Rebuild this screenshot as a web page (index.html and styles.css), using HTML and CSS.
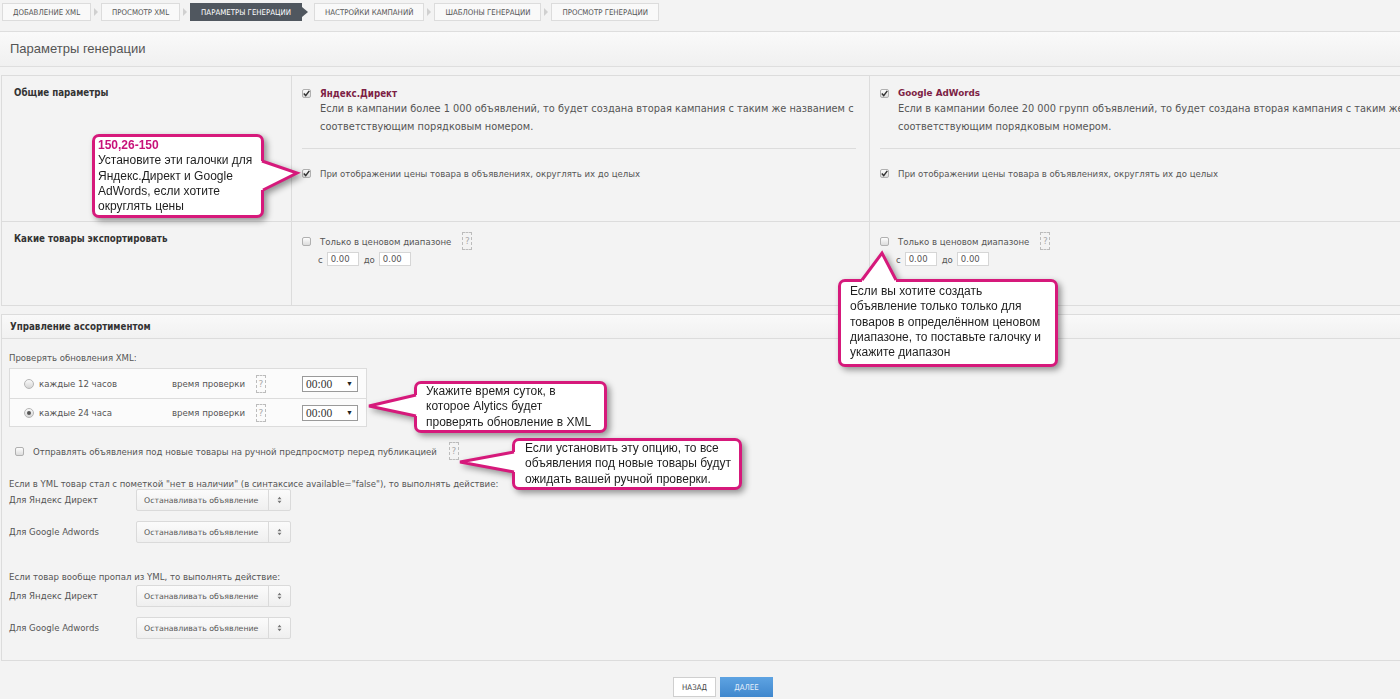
FILE: index.html
```html
<!DOCTYPE html>
<html lang="ru">
<head>
<meta charset="utf-8">
<title>Параметры генерации</title>
<link rel="stylesheet" href="styles.css">
</head>
<body>
<div class="page">
  <nav class="steps">
    <span class="step">Добавление XML</span><span class="arr"></span>
    <span class="step">Просмотр XML</span><span class="arr"></span>
    <span class="step active">Параметры генерации</span><span class="arr act"></span>
    <span class="step">Настройки кампаний</span><span class="arr"></span>
    <span class="step">Шаблоны генерации</span><span class="arr"></span>
    <span class="step">Просмотр генерации</span>
  </nav>

  <div class="titlebar"><h1>Параметры генерации</h1></div>

  <div class="grid">
    <div class="cell lab">Общие параметры</div>
    <div class="cell opt">
      <div class="ohead"><span class="cb on"><svg viewBox="0 0 9 9"><path d="M1.8 4.6 L3.7 6.6 L7.3 1.9"/></svg></span><span class="brand">Яндекс.Директ</span></div>
      <div class="desc">Если в кампании более 1 000 объявлений, то будет создана вторая кампания с таким же названием с<br>соответствующим порядковым номером.</div>
      <div class="hsep"></div>
      <div class="ohead round"><span class="cb on"><svg viewBox="0 0 9 9"><path d="M1.8 4.6 L3.7 6.6 L7.3 1.9"/></svg></span><span class="ntext">При отображении цены товара в объявлениях, округлять их до целых</span></div>
    </div>
    <div class="cell opt">
      <div class="ohead"><span class="cb on"><svg viewBox="0 0 9 9"><path d="M1.8 4.6 L3.7 6.6 L7.3 1.9"/></svg></span><span class="brand g">Google AdWords</span></div>
      <div class="desc">Если в кампании более 20 000 групп объявлений, то будет создана вторая кампания с таким же названием с<br>соответствующим порядковым номером.</div>
      <div class="hsep"></div>
      <div class="ohead round"><span class="cb on"><svg viewBox="0 0 9 9"><path d="M1.8 4.6 L3.7 6.6 L7.3 1.9"/></svg></span><span class="ntext">При отображении цены товара в объявлениях, округлять их до целых</span></div>
    </div>

    <div class="cell lab">Какие товары экспортировать</div>
    <div class="cell opt r2">
      <div class="ohead"><span class="cb"></span><span class="ntext">Только в ценовом диапазоне</span><span class="q qr">?</span></div>
      <div class="range"><span>с</span><span class="inp">0.00</span><span class="do">до</span><span class="inp">0.00</span></div>
    </div>
    <div class="cell opt r2">
      <div class="ohead"><span class="cb"></span><span class="ntext">Только в ценовом диапазоне</span><span class="q qr">?</span></div>
      <div class="range"><span>с</span><span class="inp">0.00</span><span class="do">до</span><span class="inp">0.00</span></div>
    </div>
  </div>

  <section class="panel">
    <div class="panel-h">Управление ассортиментом</div>
    <div class="panel-b">
      <div class="line l1">Проверять обновления XML:</div>
      <div class="sched">
        <div class="srow">
          <span class="rd"></span><span class="every">каждые 12 часов</span>
          <span class="when">время проверки</span><span class="q">?</span>
          <span class="tsel">00:00<i>▼</i></span>
        </div>
        <div class="srow">
          <span class="rd on"></span><span class="every">каждые 24 часа</span>
          <span class="when">время проверки</span><span class="q">?</span>
          <span class="tsel">00:00<i>▼</i></span>
        </div>
      </div>
      <div class="chkrow"><span class="cb"></span><span class="ntext">Отправлять объявления под новые товары на ручной предпросмотр перед публикацией</span><span class="q qc">?</span></div>
      <div class="line l2">Если в YML товар стал с пометкой "нет в наличии" (в синтаксисе available="false"), то выполнять действие:</div>
      <div class="selrow"><span class="slab">Для Яндекс Директ</span><span class="sel"><span class="st">Останавливать объявление</span><span class="sa"><svg viewBox="0 0 6 10"><path d="M3 1 L5.5 4 L0.5 4 Z M3 9 L5.5 6 L0.5 6 Z"/></svg></span></span></div>
      <div class="selrow"><span class="slab">Для Google Adwords</span><span class="sel"><span class="st">Останавливать объявление</span><span class="sa"><svg viewBox="0 0 6 10"><path d="M3 1 L5.5 4 L0.5 4 Z M3 9 L5.5 6 L0.5 6 Z"/></svg></span></span></div>
      <div class="line l3">Если товар вообще пропал из YML, то выполнять действие:</div>
      <div class="selrow s3"><span class="slab">Для Яндекс Директ</span><span class="sel"><span class="st">Останавливать объявление</span><span class="sa"><svg viewBox="0 0 6 10"><path d="M3 1 L5.5 4 L0.5 4 Z M3 9 L5.5 6 L0.5 6 Z"/></svg></span></span></div>
      <div class="selrow"><span class="slab">Для Google Adwords</span><span class="sel"><span class="st">Останавливать объявление</span><span class="sa"><svg viewBox="0 0 6 10"><path d="M3 1 L5.5 4 L0.5 4 Z M3 9 L5.5 6 L0.5 6 Z"/></svg></span></span></div>
    </div>
  </section>

  <div class="btns">
    <span class="btn back">Назад</span>
    <span class="btn next">Далее</span>
  </div>

  <div class="callout c1">
    <b>150,26-150</b><br>Установите эти галочки для<br>Яндекс.Директ и Google<br>AdWords, если хотите<br>округлять цены
    <svg class="tail t1" viewBox="0 0 42 36" width="42" height="36"><polygon class="tf" points="0,3 4,3 39,15 5,32 0,32"/><polyline class="ts" points="4,3 39,15 5,32"/></svg>
  </div>
  <div class="callout c2">
    Если вы хотите создать<br>объявление только только для<br>товаров в определённом ценовом<br>диапазоне, то поставьте галочку и<br>укажите диапазон
    <svg class="tail t2" viewBox="0 0 44 36" width="44" height="36"><polygon class="tf" points="6,30 26,3 40,30 40,36 6,36"/><polyline class="ts" points="6,30 26,3 40,30"/></svg>
  </div>
  <div class="callout c3">
    Укажите время суток, в<br>которое Alytics будет<br>проверять обновление в XML
    <svg class="tail t3" viewBox="0 0 54 28" width="54" height="28"><polygon class="tf" points="50,3 3,14 50,24 54,24 54,3"/><polyline class="ts" points="50,3 3,14 50,24"/></svg>
  </div>
  <div class="callout c4">
    Если установить эту опцию, то все<br>объявления под новые товары будут<br>ожидать вашей ручной проверки.
    <svg class="tail t4" viewBox="0 0 61 27" width="61" height="27"><polygon class="tf" points="57,3 3,13 57,23 61,23 61,3"/><polyline class="ts" points="57,3 3,13 57,23"/></svg>
  </div>
</div>
</body>
</html>
```
FILE: styles.css
```css
* { box-sizing: border-box; }
html, body { margin: 0; padding: 0; }
body {
  width: 1400px;
  height: 699px;
  overflow: hidden;
  background: #f3f3f3;
  color: #555;
  font-family: "DejaVu Sans Condensed", "DejaVu Sans", sans-serif;
  font-stretch: condensed;
  font-size: 9.5px;
}
.page { position: relative; width: 1440px; }

/* steps */
.steps { display: flex; align-items: center; padding: 3px 0 0 2px; height: 21px; }
.step {
  height: 18px; display: flex; align-items: center;
  padding: 0 10px; border: 1px solid #dcdcdc; background: #f9f9f9;
  text-transform: uppercase; font-size: 7.8px; color: #555; white-space: nowrap;
}
.step.active { background: #50575f; border-color: #50575f; color: #fff; }
.arr { width: 10px; height: 18px; display: flex; align-items: center; justify-content: center; }
.arr::before { content: ""; border-left: 4px solid #d0d0d0; border-top: 4px solid transparent; border-bottom: 4px solid transparent; }
.arr.act { width: 12px; justify-content: flex-start; }
.arr.act::before { border-left: 6px solid #50575f; border-top-width: 5px; border-bottom-width: 5px; }

/* title */
.titlebar {
  margin-top: 10px; height: 36px;
  border-top: 1px solid #dedede; border-bottom: 1px solid #dedede;
  background: linear-gradient(#fafafa, #f0f0f0);
}
.titlebar h1 {
  margin: 0; padding-left: 10px; line-height: 34px;
  font-family: "Liberation Sans", Arial, sans-serif; font-stretch: normal;
  font-size: 13px; font-weight: normal; color: #555;
}

/* grid */
.grid {
  margin: 8px 0 0 1px;
  display: grid;
  grid-template-columns: 290px 578px 1fr;
  grid-template-rows: 146px 84px;
  border-top: 1px solid #dcdcdc; border-left: 1px solid #dcdcdc;
}
.cell { border-right: 1px solid #dcdcdc; border-bottom: 1px solid #dcdcdc; }
.lab { padding: 11px 12px; font-weight: bold; color: #333; font-size: 9.7px; }
.opt { padding: 10px 13px 0 10px; }
.ohead { display: flex; align-items: center; height: 14px; }
.ohead .cb { margin-right: 9px; }
.brand { font-weight: bold; color: #7d1f45; font-size: 9.7px; }
.brand.g { font-family: "DejaVu Sans", sans-serif; font-stretch: normal; font-size: 8.8px; }
.ntext { color: #555; font-size: 9.5px; white-space: nowrap; }
.desc {
  margin-left: 18px; font-family: "DejaVu Sans", sans-serif; font-stretch: normal; font-size: 9.8px;
  line-height: 18px; color: #555; white-space: nowrap;
}
.hsep { margin-top: 12px; border-top: 1px solid #dcdcdc; }
.ohead.round { margin-top: 17px; }
.r2 { padding-top: 12px; }
.qr { margin-left: 11px; }
.range { display: flex; align-items: center; margin: 4px 0 0 16px; height: 14px; color: #555; }
.inp {
  margin-left: 4px; width: 32px; height: 14px; background: #fff; border: 1px solid #d6d6d6;
  font-family: "DejaVu Sans", sans-serif; font-stretch: normal; font-size: 8.5px; color: #555; padding-left: 3px;
  display: flex; align-items: center;
}
.do { margin-left: 5px; }

/* controls */
.cb {
  flex: none; width: 9px; height: 9px; border: 1px solid #b0b0b0; border-radius: 2px;
  background: linear-gradient(#fdfdfd, #dcdcdc); display: inline-flex;
}
.cb svg { width: 9px; height: 9px; margin: -1px; }
.cb svg path { fill: none; stroke: #333; stroke-width: 1.5; }
.q {
  flex: none; width: 10px; height: 18px; border: 1px dashed #bcbcbc; color: #aaa;
  display: inline-flex; align-items: center; justify-content: center;
  font-family: "DejaVu Sans", sans-serif; font-stretch: normal; font-size: 9px;
}
.rd {
  flex: none; width: 10px; height: 10px; border: 1px solid #b5b5b5; border-radius: 50%;
  background: linear-gradient(#fafafa, #d6d6d6); display: inline-flex; align-items: center; justify-content: center;
}
.rd.on::after { content: ""; width: 4px; height: 4px; border-radius: 50%; background: #555; }

/* panel */
.panel { margin: 8px 0 0 1px; border: 1px solid #dcdcdc; border-right: 0; }
.panel-h {
  height: 24px; line-height: 24px; padding-left: 8px; font-weight: bold; color: #333; font-size: 9.7px;
  border-bottom: 1px solid #dcdcdc; background: linear-gradient(#f9f9f9, #f1f1f1);
}
.panel-b { padding: 12px 0 21px 7px; }
.line { line-height: 14px; color: #555; white-space: nowrap; }
.sched { margin-top: 3px; width: 358px; border: 1px solid #dcdcdc; background: #fbfbfb; }
.srow { display: flex; align-items: center; height: 29px; padding-left: 14px; }
.srow + .srow { border-top: 1px solid #dcdcdc; height: 28px; }
.every { margin-left: 5px; width: 133px; font-family: "DejaVu Sans", sans-serif; font-stretch: normal; font-size: 8.6px; color: #555; }
.when { width: 84px; font-family: "DejaVu Sans", sans-serif; font-stretch: normal; font-size: 8.6px; color: #555; }
.tsel {
  margin-left: 36px; width: 56px; height: 16px; border: 1px solid #9a9a9a; background: #fff;
  display: flex; align-items: center; justify-content: space-between; padding: 0 4px 0 3px;
  font-family: "Liberation Serif", serif; font-stretch: normal; font-size: 11.5px; color: #333;
}
.tsel i { font-style: normal; font-size: 7px; color: #222; }
.chkrow { display: flex; align-items: center; height: 18px; margin: 15px 0 0 6px; }
.chkrow .cb { margin-right: 9px; }
.qc { margin-left: 12px; }
.l2 { margin-top: 19px; line-height: 10px; }
.selrow { display: flex; align-items: center; height: 22px; margin-top: 10px; }
.l2 + .selrow { margin-top: 0; }
.slab { width: 127px; font-family: "DejaVu Sans", sans-serif; font-stretch: normal; font-size: 8.6px; color: #555; }
.sel {
  width: 155px; height: 22px; display: flex; border: 1px solid #dadada; border-radius: 2px;
  background: linear-gradient(#fbfbfb, #efefef);
}
.st { flex: 1; display: flex; align-items: center; padding-left: 7px; font-family: "DejaVu Sans", sans-serif; font-stretch: normal; font-size: 7.8px; color: #555; }
.sa { width: 22px; border-left: 1px solid #dadada; display: flex; align-items: center; justify-content: center; }
.sa svg { width: 5px; height: 8px; }
.sa svg path { fill: #777; }
.l3 { margin-top: 28px; line-height: 12px; font-family: "DejaVu Sans", sans-serif; font-stretch: normal; font-size: 8.6px; }
.s3 { margin-top: 2px; }

/* buttons */
.btns { display: flex; margin: 16px 0 0 673px; }
.btn {
  height: 20px; display: flex; align-items: center; justify-content: center;
  text-transform: uppercase; font-size: 7.8px;
}
.back { width: 43px; background: #fff; border: 1px solid #cfcfcf; color: #444; }
.next { width: 53px; margin-left: 4px; background: linear-gradient(#5ea3e2, #3f87cd); color: #e6f0fb; }

/* callouts */
.callout {
  position: absolute; background: #fff; border: 3px solid #d6197b; border-radius: 7px;
  font-family: "Liberation Sans", Arial, sans-serif; font-stretch: normal; font-size: 12px; line-height: 15.3px; color: #1e1e1e;
  filter: drop-shadow(3px 3px 3px rgba(0,0,0,0.4));
  white-space: nowrap;
}
.callout b { color: #c8127a; }
.tail { position: absolute; overflow: visible; }
.tf { fill: #fff; }
.ts { fill: none; stroke: #d6197b; stroke-width: 3; stroke-linejoin: miter; }
.c1 { left: 92px; top: 134px; width: 172px; height: 84px; padding: 1px 0 0 3px; }
.t1 { left: 163px; top: 21px; }
.c2 { left: 838px; top: 279px; width: 220px; height: 88px; padding: 2px 0 0 9px; }
.t2 { left: 15px; top: -32px; }
.c3 { left: 414px; top: 381px; width: 193px; height: 52px; padding: 0 0 0 9px; }
.t3 { left: -51px; top: 8px; }
.c4 { left: 512px; top: 438px; width: 230px; height: 52px; padding: 0 0 0 10px; }
.t4 { left: -58px; top: 8px; }
```
